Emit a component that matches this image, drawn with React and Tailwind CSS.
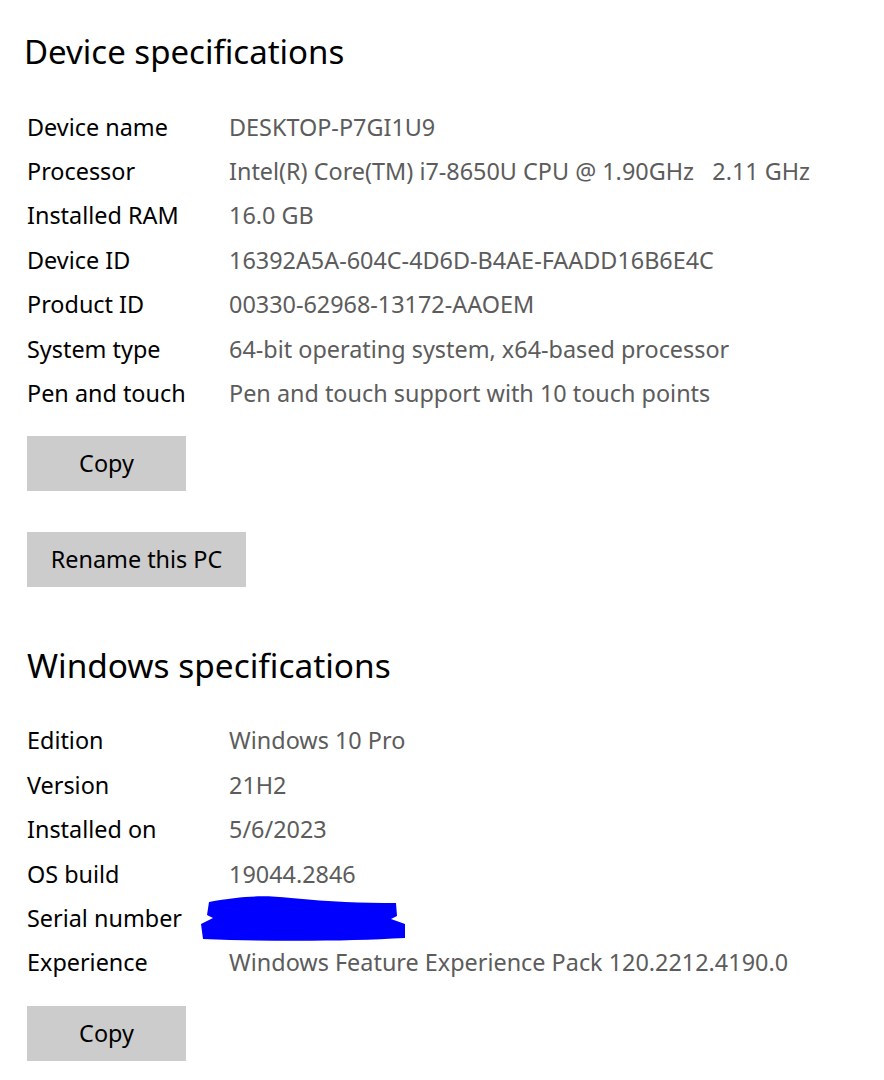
const device = [
  ["Device name", "DESKTOP-P7GI1U9"],
  ["Processor", "Intel(R) Core(TM) i7-8650U CPU @ 1.90GHz   2.11 GHz"],
  ["Installed RAM", "16.0 GB"],
  ["Device ID", "16392A5A-604C-4D6D-B4AE-FAADD16B6E4C"],
  ["Product ID", "00330-62968-13172-AAOEM"],
  ["System type", "64-bit operating system, x64-based processor"],
  ["Pen and touch", "Pen and touch support with 10 touch points"],
];

const windows = [
  ["Edition", "Windows 10 Pro"],
  ["Version", "21H2"],
  ["Installed on", "5/6/2023"],
  ["OS build", "19044.2846"],
  ["Serial number", null],
  ["Experience", "Windows Feature Experience Pack 120.2212.4190.0"],
];

function Scribble() {
  return (
    <svg width="206" height="50" viewBox="0 0 206 50" className="-ml-[28px]">
      <path
        d="M8 8 C40 2 60 1 90 4 C130 8 160 9 195 9 L196 22 L190 25 L204 30 L204 44 C150 47 80 48 2 45 L0 30 L12 24 L6 21 Z"
        fill="#0000ff"
      />
    </svg>
  );
}

function Rows({ items }) {
  return (
    <div className="flex flex-col">
      {items.map(([k, v]) => (
        <div key={k} className="flex h-[44.4px] items-center">
          <div className="w-[202px] shrink-0 text-black">{k}</div>
          {v === null ? (
            <Scribble />
          ) : (
            <div className="whitespace-pre text-[#5c5c5c]">{v}</div>
          )}
        </div>
      ))}
    </div>
  );
}

function Button({ children, w }) {
  return (
    <button className={`${w} h-[55px] bg-[#cccccc] text-center text-black`}>
      {children}
    </button>
  );
}

export default function App() {
  return (
    <div
      className="min-h-screen bg-white pl-[27px] text-[23.4px]"
      style={{ fontFamily: '"Noto Sans", sans-serif' }}
    >
      <h1 className="-ml-[3px] pt-[30px] text-[33px] leading-[44px] text-black">
        Device specifications
      </h1>
      <div className="mt-[31px]">
        <Rows items={device} />
      </div>
      <div className="mt-[20px]">
        <Button w="w-[159px]">Copy</Button>
      </div>
      <div className="mt-[41px]">
        <Button w="w-[219px]">Rename this PC</Button>
      </div>
      <h2 className="mt-[56px] text-[33.4px] leading-[44px] text-black">
        Windows specifications
      </h2>
      <div className="mt-[32px]">
        <Rows items={windows} />
      </div>
      <div className="mt-[21px]">
        <Button w="w-[159px]">Copy</Button>
      </div>
    </div>
  );
}
